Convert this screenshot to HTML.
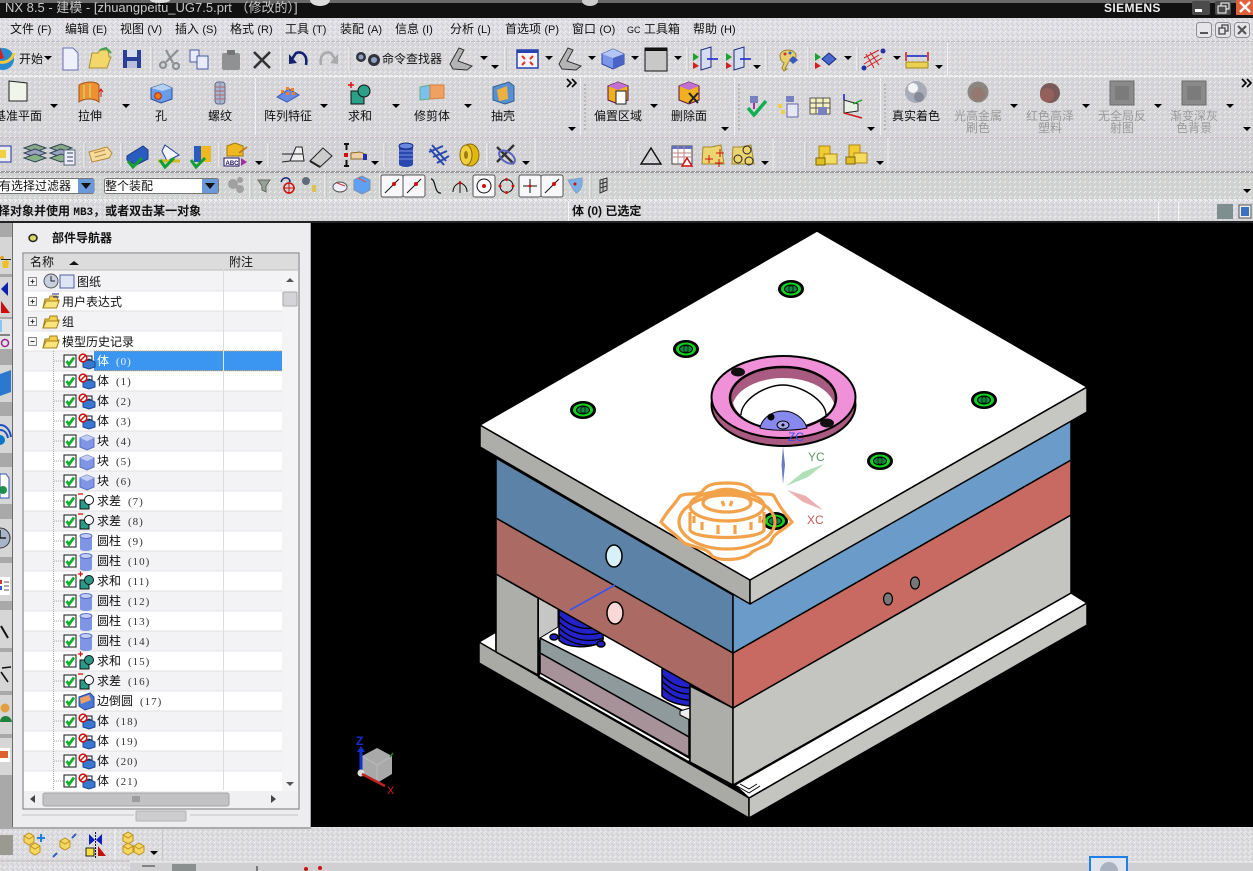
<!DOCTYPE html>
<html><head><meta charset="utf-8"><title>NX 8.5</title>
<style>
html,body{margin:0;padding:0;background:#000;width:1253px;height:871px;overflow:hidden}
svg{display:block}
text{font-family:"Liberation Sans","WenQuanYi Zen Hei","Noto Sans CJK SC",sans-serif;font-size:12px;fill:#111}
.d{fill:#9a9a9a}
.m{font-size:12px}
.b{font-weight:bold;font-family:"Liberation Sans","Noto Sans CJK SC",sans-serif}
.n{font-family:"Liberation Serif",serif;font-size:11px;fill:#333;letter-spacing:1px}
.c{text-anchor:middle}
</style></head><body>
<svg width="1253" height="871" viewBox="0 0 1253 871" xmlns="http://www.w3.org/2000/svg">
<defs>
<pattern id="dit" width="5" height="5" patternUnits="userSpaceOnUse"><rect x="0" y="1" width="1" height="1" fill="#f6eef4"/><rect x="3" y="0" width="1" height="1" fill="#c4c8d8"/><rect x="1" y="3" width="1" height="1" fill="#d8c8d0"/><rect x="4" y="2" width="1" height="1" fill="#eef2f4"/><rect x="2" y="4" width="1" height="1" fill="#c8ccc8"/></pattern>
<g id="ar"><path d="M-4-2H4L0 2Z" fill="#000"/></g>
<g id="more"><path d="M-5-4-1 0-5 4M0-4 4 0 0 4" fill="none" stroke="#000" stroke-width="1.6"/></g>
<g id="sp"><path d="M0-12V12" stroke="#f4f4f6" stroke-width="1.2"/><path d="M1-12V12" stroke="#a8a8aa" stroke-width=".6"/></g>
<g id="doc"><path d="M-7-11H3L8-6V11H-7Z" fill="#eef0fb" stroke="#6a6fb5"/></g>
<g id="fold"><path d="M-11 9-8-6H-2L0-9H8L9-2 11-2 7 9Z" fill="#f3d76a" stroke="#a6913a"/><path d="M0-9 6-11 11-6" fill="none" stroke="#3fa14a" stroke-width="2"/></g>
<g id="save"><rect x="-9" y="-9" width="18" height="18" fill="#2a3f97"/><rect x="-5" y="-9" width="10" height="7" fill="#d7dcec"/><rect x="-5" y="2" width="10" height="7" fill="#b9c0d6"/></g>
<g id="sci" stroke="#8d9092" fill="none" stroke-width="2.2"><path d="M-3-9 4 4M9-9-3 3"/><circle cx="-6" cy="6" r="3"/><circle cx="7" cy="7" r="3"/></g>
<g id="cop" fill="#e8ecfa" stroke="#4a5aa0"><path d="M-10-9H-1V3H-10Z"/><path d="M-3-3H8V10H-3Z"/></g>
<g id="pas"><rect x="-9" y="-7" width="18" height="17" rx="2" fill="#8f9192"/><rect x="-4" y="-10" width="8" height="5" fill="#737576"/></g>
<g id="x"><path d="M-8-8 8 8M8-8-8 8" stroke="#333" stroke-width="2.6"/></g>
<g id="und"><path d="M-8 3 -2-6C4-8 10-4 8 6" fill="none" stroke="#14226e" stroke-width="2.6"/><path d="M-9-5-9 5-1 4Z" fill="#14226e"/></g>
<g id="red"><path d="M8 3 2-6C-4-8-10-4-8 6" fill="none" stroke="#a8aaac" stroke-width="2.6"/><path d="M9-5 9 5 1 4Z" fill="#a8aaac"/></g>
<g id="bino"><circle cx="-6" cy="-1" r="5" fill="#30323c"/><circle cx="7" cy="2" r="6" fill="#30323c"/><circle cx="7" cy="2" r="3" fill="#8fa0c0"/><circle cx="-6" cy="-1" r="2.5" fill="#8fa0c0"/></g>
<g id="angl"><path d="M-11 5-2-11 3-9-3 2 11 7 6 11-8 10Z" fill="#b4b4b4" stroke="#333"/></g>
<g id="fit"><rect x="-10" y="-9" width="21" height="18" fill="#f4f4fa" stroke="#2844b0" stroke-width="1.5"/><rect x="-10" y="-9" width="21" height="3" fill="#2844b0"/><path d="M-5-3-2 0M6-3 3 0M-5 6-2 3M6 6 3 3" stroke="#e03018" stroke-width="2"/></g>
<g id="cube"><path d="M-11-5 0-10 11-5V5L0 10-11 5Z" fill="#7d95e8" stroke="#3148a8"/><path d="M-11-5 0-1 11-5 0-10Z" fill="#b6c6f4"/><path d="M0-1V10L11 5V-5Z" fill="#4b63c4"/></g>
<g id="sq"><rect x="-11" y="-11" width="22" height="23" fill="#c8c8c8" stroke="#111"/><rect x="-11" y="-11" width="22" height="3" fill="#111"/></g>
<g id="mir"><path d="M-3-9 7-12V8L-3 11Z" fill="#d6ddf2" stroke="#1d2a78"/><path d="M-11-6-5-2-11 2Z" fill="#20a030"/><path d="M-11 3-5 7-11 10Z" fill="#d02020"/><path d="M3 0H14" stroke="#1d2ad0" stroke-width="1.6"/></g>
<g id="pal"><path d="M-8-3C-8-11 8-11 8-3 8 3 0 1 0 4L-3 10H-1L-4 12-6 9-4 4C-6 3-8 1-8-3Z" fill="#e7cf6e" stroke="#9a8636"/><circle cx="-3" cy="-5" r="1.5" fill="#d03030"/><circle cx="2" cy="-6" r="1.5" fill="#3060d0"/><path d="M5-3 10 1 5 5 1 1Z" fill="#3858c0"/></g>
<g id="dia"><path d="M-10-6-4-2-10 2Z" fill="#20a030"/><path d="M-10 3-4 7-10 10Z" fill="#d02020"/><path d="M4-6 11 0 4 6-3 0Z" fill="#4868d0" stroke="#1d2a78"/></g>
<g id="ant" stroke="#d02020"><path d="M-9-1 6-9M-9 5 6-4M-6 8 9-1M-3-7 6 6M-7-5 1 9" fill="none"/><circle cx="10" cy="-8" r="2.5" fill="#2030a0" stroke="none"/><circle cx="-9" cy="9" r="2.5" fill="#2030a0" stroke="none"/></g>
<g id="rul"><path d="M-11-9V0M11-9V0" stroke="#d01818" stroke-width="1.5"/><path d="M-10-5H10" stroke="#1020c0" stroke-width="1.5"/><rect x="-11" y="1" width="22" height="6" fill="#ecd050" stroke="#a08a20"/></g>
<g id="plane"><path d="M-9-11 9-9V9L-9 9Z" fill="#f0f4ea" stroke="#222"/></g>
<g id="ext"><path d="M-11-8C-4-12 6-12 9-8V9C4 5-6 5-11 9Z" fill="#f09030" stroke="#a05010"/><path d="M-6-8V6M0-9V5" stroke="#d8c058" stroke-width="2"/><path d="M11-3V4M9-1 11-4 13-1" stroke="#d01818" fill="none"/></g>
<g id="hole"><path d="M-10-5 2-9 11-5V6L0 10-10 6Z" fill="#6a9ce8" stroke="#2c5098"/><path d="M-10-5 1-2 11-5 2-9Z" fill="#b4d0f4"/><circle cx="-3" cy="3" r="3.4" fill="#f07818" stroke="#b03010"/></g>
<g id="thrd"><rect x="-5" y="-11" width="10" height="22" rx="3" fill="#a8b4d0" stroke="#606a88"/><path d="M-5-6H5M-5-2H5M-5 2H5M-5 6H5" stroke="#c06060"/><path d="M0-11V11" stroke="#808aa8"/></g>
<g id="arr"><path d="M-11 3 1-5 11 1-1 8Z" fill="#6a8ce0" stroke="#3a5ab8"/><rect x="-7" y="-4" width="3" height="3" fill="#f08020"/><rect x="-2" y="-7" width="3" height="3" fill="#f08020"/><rect x="3" y="-6" width="3" height="3" fill="#f08020"/><rect x="-2" y="-2" width="3" height="3" fill="#f08020"/><rect x="4" y="-2" width="3" height="3" fill="#f08020"/></g>
<g id="uni"><rect x="-9" y="-3" width="13" height="13" fill="#2aa088" stroke="#111"/><circle cx="4" cy="-3" r="6" fill="#2aa088" stroke="#111"/><path d="M-12-9H-6M-9-12V-6" stroke="#e01010" stroke-width="1.5"/></g>
<g id="trim"><path d="M-12-6-2-8V6L-12 7Z" fill="#7cc0ee" stroke="#6a8"/><path d="M-2-8 12-8V5L-2 6Z" fill="#f0a060" stroke="#d08040"/></g>
<g id="shell"><path d="M-10-6 6-11 11-7V8L2 11-10 7Z" fill="#5a90d0" stroke="#306090"/><path d="M-6-3 4-7 5 6-4 8Z" fill="#f0b040"/></g>
<g id="offs"><path d="M-10-7 0-11 10-7V7L0 11-10 7Z" fill="#f0b020" stroke="#601040"/><path d="M-10-7 0-3 10-7 0-11Z" fill="#c070d0"/><path d="M-2-2H8V11H-2Z" fill="#fff" stroke="#222"/></g>
<g id="delf"><path d="M-10-7 0-11 10-7V7L0 11-10 7Z" fill="#f0b020" stroke="#601040"/><path d="M-10-7 0-3 10-7 0-11Z" fill="#c070d0"/><path d="M0 0 9 10M9 0 0 10" stroke="#222" stroke-width="2"/></g>
<g id="chk"><path d="M-9 1-3 8 9-6" fill="none" stroke="#10b050" stroke-width="3.4"/><rect x="-7" y="-11" width="8" height="7" fill="#7880c0"/><path d="M-3-4V2" stroke="#a030a0" stroke-width="2"/></g>
<g id="hier"><rect x="-1" y="-3" width="11" height="13" fill="#e6e6f6" stroke="#6668a8"/><rect x="-10" y="-3" width="4" height="4" fill="#f0d040"/><rect x="-7" y="3" width="4" height="4" fill="#f0d040"/><rect x="-2" y="-11" width="8" height="6" fill="#7880c0"/></g>
<g id="tab"><rect x="-10" y="-9" width="20" height="16" fill="#f4f0c0" stroke="#555"/><path d="M-10-4H10M-10 1H10M-4-9V7M3-9V7" stroke="#555"/><rect x="-2" y="0" width="9" height="8" fill="#7880c0"/></g>
<g id="wcs"><path d="M-6-8-6 5 8 3 8-4Z" fill="#e8f0e8" stroke="#222"/><path d="M-6 5 12 10" stroke="#d01818" stroke-width="1.5"/><path d="M3-4 12-8" stroke="#18a018" stroke-width="1.5"/><path d="M-6-8V-14" stroke="#1818d0" stroke-width="1.5"/></g>
<g id="ball"><circle r="11" fill="#a8acb8"/><circle cx="-3" cy="-4" r="5" fill="#f4f4f6"/><circle cx="3" cy="5" r="5" fill="#787c88" opacity=".7"/></g>
<g id="ballg"><circle r="10.500" fill="#8b8780"/><circle cx="0" cy="2" r="7" fill="#9a6f68" opacity=".6"/></g>
<g id="ballr"><circle r="10" fill="#7a5a58"/><circle cx="-3" cy="2" r="7" fill="#94605c"/></g>
<g id="sqg"><rect x="-12" y="-12" width="24" height="24" fill="#8a8a8a" stroke="#6c6c6c"/><rect x="-7" y="-7" width="14" height="14" fill="#7b7b7b"/></g>
<g id="lay" stroke="#345"><path d="M-11-7 0-11 11-7 0-3Z" fill="#84a888"/><path d="M-11-2 0-6 11-2 0 2Z" fill="#98a4c0"/><path d="M-11 3 0-1 11 3 0 7Z" fill="#88b088"/></g>
<g id="lis"><use href="#lay" x="-4"/><rect x="-1" y="-5" width="11" height="15" fill="#eef" stroke="#567"/><path d="M2-2H8M2 2H8M2 6H8" stroke="#345"/></g>
<g id="tag"><path d="M-11-3 7-8 12-2 9 3-8 7Z" fill="#f4dc9c" stroke="#b88a3a"/><path d="M-6-2 5-5M-5 2 6-1" stroke="#b88a3a"/></g>
<g id="v1"><path d="M-11 1 5-9 10-5V4L-2 10-11 5Z" fill="#2a5cc0" stroke="#1a3a8a"/><path d="M-10 6-5 12 4 3" fill="none" stroke="#10a030" stroke-width="3"/></g>
<g id="v2"><path d="M-5-10 9 0-3 6-8-4Z" fill="#f4f4ff" stroke="#2040a0"/><path d="M-12 6 10 6" stroke="#d8b820" stroke-width="3"/><path d="M-10 5-5 12 4 3" fill="none" stroke="#10a030" stroke-width="3"/></g>
<g id="v3"><rect x="-7" y="-9" width="8" height="16" fill="#2a5cc0"/><rect x="0" y="-9" width="10" height="16" fill="#f0b820"/><path d="M-10 5-5 12 4 3" fill="none" stroke="#10a030" stroke-width="3"/></g>
<g id="abc"><path d="M-8-11 0-14 8-11V-1H-8Z" fill="#f0b820" stroke="#a07810"/><rect x="-11" y="1" width="15" height="8" fill="#fff" stroke="#201060"/><text x="-9.500" y="8" style="font-size:6px;font-weight:bold;fill:#201060">ABC</text><path d="M6 1 12 5 6 9Z" fill="#a030a0"/><path d="M4-4 12-10" stroke="#c08020" stroke-width="2"/></g>
<g id="t1"><path d="M-10 7-2 6 4-8 10-8 12 6H-2" fill="#eee" stroke="#222"/><path d="M-10-1H11" stroke="#222"/></g>
<g id="t2"><path d="M-11 4 2-9 11-1-1 10Z" fill="#ccc" stroke="#222"/><path d="M-11 4-1 10" stroke="#222" stroke-width="2"/></g>
<g id="t3"><path d="M-11-11H-6M-11 11H-6M-8.500-11V-5M-8.500 11V5" stroke="#111" stroke-width="2"/><rect x="-11" y="-2" width="4" height="4" fill="#d01010"/><path d="M-4-2 5-3 10-1V4H-4Z" fill="#f0d0a0" stroke="#8a6a30"/><rect x="8" y="-1" width="4" height="6" fill="#2030b0"/></g>
<g id="cyl"><rect x="-7" y="-9" width="14" height="18" fill="#2a48b0"/><ellipse cy="-9" rx="7" ry="3" fill="#6a88e0" stroke="#1a2a80"/><ellipse cy="9" rx="7" ry="3" fill="#2a48b0"/><path d="M-7-4H7M-7 0H7M-7 4H7" stroke="#7a90e0"/></g>
<g id="spr"><path d="M-6-10 8 6M-8-6 6 10M-9-3 5-9M-5 2 9-4M-1 8 11 1" stroke="#2a48b0" stroke-width="2" fill="none"/></g>
<g id="coil"><ellipse cx="1" rx="9" ry="11" fill="#e0b810" stroke="#8a6a08"/><ellipse cx="-3" rx="6" ry="10" fill="#f0d040" stroke="#8a6a08"/><ellipse cx="-3" rx="2" ry="4" fill="#a07c10"/></g>
<g id="stri"><path d="M-8-8 9 9M9-10-8 7" stroke="#333" stroke-width="2.4"/><ellipse cx="2" cy="2" rx="9" ry="5" fill="none" stroke="#5a64c0" stroke-width="2" transform="rotate(35 2 2)"/></g>
<g id="tri"><path d="M-10 8 0-8 10 8Z" fill="none" stroke="#111" stroke-width="1.4"/></g>
<g id="grid"><rect x="-10" y="-9" width="20" height="18" fill="#fafafa" stroke="#444"/><rect x="-10" y="-9" width="20" height="3" fill="#6070c0"/><path d="M-10-2H10M-10 2H10M-4-9V9M2-9V9" stroke="#bb8888"/><path d="M0 11 5 3 10 11Z" fill="#fff" stroke="#d01010" stroke-width="1.5"/></g>
<g id="ff1"><path d="M-11 9-10-8H-2L8-10 11 9Z" fill="#ecd470" stroke="#a08a30"/><path d="M-8 4H0M-4 0V8M3-2H11M7-6V2M2 8H10M6 4V12" stroke="#d01010"/></g>
<g id="ff2"><path d="M-11 9-10-8H-2L8-10 11 9Z" fill="#ecd470" stroke="#a08a30"/><circle cx="4" cy="-5" r="4" fill="none" stroke="#222"/><circle cx="-5" cy="4" r="4" fill="none" stroke="#222"/><circle cx="6" cy="6" r="4" fill="none" stroke="#222"/></g>
<g id="lk1"><path d="M-8-10 3-10V3H-8Z" fill="#f0cc30" stroke="#b08810"/><path d="M-3-2 10-2V8H-3Z" fill="#f4dc60" stroke="#b08810"/><rect x="-11" y="2" width="9" height="7" fill="#e0c020" stroke="#806408"/></g>
<g id="yc"><path d="M-5-5 0-8 5-5V1L0 4-5 1Z" fill="#f4d860" stroke="#c09020"/><path d="M-5-5 0-2 5-5" fill="none" stroke="#c09020"/></g>
<g id="cb"><rect x="0" y="0" width="12" height="12" fill="#fff" stroke="#111"/><path d="M2.500 6 5 9.500 10 2.500" fill="none" stroke="#10b030" stroke-width="2.800"/></g>
<g id="ib"><path d="M3-2 9 1V6L3 8-3 6V1Z" fill="#3a78d0" stroke="#1a4a90"/><path d="M0-1H6V-5H0" fill="none" stroke="#123" stroke-width="1"/><circle cx="-3" cy="-3" r="3.800" fill="#fff" stroke="#d01010" stroke-width="1.600"/><path d="M-6 0 0-6" stroke="#d01010" stroke-width="1.400"/></g>
<g id="ik"><path d="M-6-3 1-6 8-3V6L1 9-6 6Z" fill="#7f95e6" stroke="#5a70c0"/><path d="M-6-3 1 0 8-3 1-6Z" fill="#c2cef6"/></g>
<g id="ic"><rect x="-6" y="-5" width="12" height="13" fill="#7f95e6"/><ellipse cy="-5" rx="6" ry="2.500" fill="#c2cef6" stroke="#5a70c0"/><ellipse cy="8" rx="6" ry="2" fill="#7f95e6"/></g>
<g id="iu"><rect x="-6" y="-1" width="9" height="9" fill="#2a9a88" stroke="#111"/><circle cx="3" cy="-1" r="4.500" fill="#2a9a88" stroke="#111"/><path d="M-8-7H-3M-5.500-9.500V-4.500" stroke="#e01010" stroke-width="1.300"/></g>
<g id="im"><rect x="-6" y="-1" width="9" height="9" fill="#2a9a88" stroke="#111"/><circle cx="3" cy="-1" r="4.500" fill="#fff" stroke="#111"/><path d="M-8-7H-3" stroke="#e01010" stroke-width="1.300"/></g>
<g id="ie"><path d="M-7-4 4-8 8-4V6L-1 9-7 5Z" fill="#4a78d8" stroke="#2a4a98"/><path d="M-6-3 3-6 5-1-5 3Z" fill="#f0a060"/></g>
<g id="pl"><rect x="-3.500" y="-3.500" width="8" height="8" fill="#f4f4f4" stroke="#888"/><path d="M-1.500.5H2.500" stroke="#333"/></g>
<g id="pp"><use href="#pl"/><path d="M.5-1.500V2.500" stroke="#333"/></g>
<g id="y1"><path d="M-8 6-6-3H-2L-1-6H6L6.500-2 8-2 5.500 6Z" fill="#f4d050" stroke="#a08020"/><path d="M-8 6-5-1H8L5.500 6Z" fill="#fbe47a" stroke="#a08020"/></g>
<g id="bx"><rect x="-11" y="-11" width="22" height="22" rx="2" fill="#f8f8fa" stroke="#555"/></g>
<g id="ln"><path d="M-7 7 7-7" stroke="#111"/><circle cx="2" cy="-2" r="2" fill="#d01010"/></g>
<g id="scr"><ellipse rx="13" ry="9" fill="#000"/><ellipse rx="10" ry="6.500" fill="#10d020"/><ellipse rx="6.500" ry="4" fill="#108a40" stroke="#000"/><rect x="-2" y="-3" width="4" height="6" fill="#108a40" stroke="#000" stroke-width=".7"/></g>
</defs>

<!-- chrome backgrounds -->
<rect width="1253" height="871" fill="#d4d4d6"/>
<rect width="1253" height="3" fill="#6a6868"/>
<rect y="3" width="1253" height="15" fill="#111"/>
<rect y="18" width="1253" height="24" fill="#e0dfe3"/>
<rect y="41" width="1253" height="1" fill="#bdbdc0"/>
<rect y="42" width="1253" height="33" fill="#d9d9dc"/>
<rect y="75" width="1253" height="2" fill="#f0f0f2"/>
<rect y="77" width="1253" height="60" fill="#d6d6d8"/>
<rect y="137" width="1253" height="1" fill="#c8bcc8"/>
<rect y="138" width="1253" height="34" fill="#d2d2d4"/>
<rect y="171" width="1253" height="2" fill="#9c9c9e"/>
<rect y="173" width="1253" height="26" fill="#d2d4d2"/>
<rect y="199" width="1253" height="2" fill="#ececee"/>
<rect y="201" width="1253" height="20" fill="#dadadc"/>
<rect y="18" width="1253" height="203" fill="url(#dit)"/>
<rect y="221" width="1253" height="2" fill="#222"/>

<!-- title -->
<text x="5" y="12" style="font-size:13px;fill:#c8c8c8">NX 8.5 - 建模 - [zhuangpeitu_UG7.5.prt （修改的）]</text>
<ellipse cx="160" cy="0" rx="10" ry="3" fill="#ddd"/><ellipse cx="320" cy="0" rx="10" ry="6" fill="#ddd"/><ellipse cx="590" cy="1" rx="8" ry="5" fill="#ccc"/>
<text x="1104" y="12" class="b" style="font-size:12px;fill:#eee;letter-spacing:.4px">SIEMENS</text>
<rect x="1192" y="1" width="18" height="14" rx="2" fill="#4a4a4a"/><rect x="1195" y="9" width="7" height="3" fill="#fff"/>
<rect x="1215" y="1" width="16" height="14" rx="2" fill="#4a4a4a"/><path d="M1218 6H1226V13H1218ZM1221 6V3H1229V9H1226" fill="none" stroke="#fff"/>
<rect x="1236" y="0" width="17" height="15" fill="#e0603a"/><path d="M1240 2 1250 12M1250 2 1240 12" stroke="#fff" stroke-width="2.400"/>

<!-- menu -->
<g class="m">
<text x="10" y="33">文件 <tspan style="font-size:11px">(F)</tspan></text>
<text x="65" y="33">编辑 <tspan style="font-size:11px">(E)</tspan></text>
<text x="120" y="33">视图 <tspan style="font-size:11px">(V)</tspan></text>
<text x="175" y="33">插入 <tspan style="font-size:11px">(S)</tspan></text>
<text x="230" y="33">格式 <tspan style="font-size:11px">(R)</tspan></text>
<text x="285" y="33">工具 <tspan style="font-size:11px">(T)</tspan></text>
<text x="340" y="33">装配 <tspan style="font-size:11px">(A)</tspan></text>
<text x="395" y="33">信息 <tspan style="font-size:11px">(I)</tspan></text>
<text x="450" y="33">分析 <tspan style="font-size:11px">(L)</tspan></text>
<text x="505" y="33">首选项 <tspan style="font-size:11px">(P)</tspan></text>
<text x="572" y="33">窗口 <tspan style="font-size:11px">(O)</tspan></text>
<text x="627" y="33"><tspan style="font-size:9px">GC</tspan> 工具箱</text>
<text x="693" y="33">帮助 <tspan style="font-size:11px">(H)</tspan></text>
</g>
<g fill="#e6e6ea" stroke="#8e8e92">
<rect x="1196.500" y="22.500" width="15" height="15" rx="3"/><rect x="1215.500" y="22.500" width="15" height="15" rx="3"/><rect x="1234.500" y="22.500" width="15" height="15" rx="3"/></g>
<path d="M1200 33H1208" stroke="#555" stroke-width="2"/><path d="M1219 28H1225V34H1219ZM1222 28V25H1228V31H1225" fill="none" stroke="#444" stroke-width="1.300"/><path d="M1238 26 1246 34M1246 26 1238 34" stroke="#555" stroke-width="2.200"/>

<!-- row 1 -->
<circle cx="3" cy="59" r="11" fill="#2a8ad0"/><path d="M-6 58C0 66 12 62 14 53" fill="none" stroke="#f0c840" stroke-width="3"/><path d="M0 47 4 58-2 60Z" fill="#d02020"/>
<text x="19" y="63">开始</text><use href="#ar" x="48" y="58"/>
<use href="#doc" x="70" y="59"/><use href="#fold" x="100" y="59"/><use href="#save" x="132" y="59"/>
<use href="#sp" x="151" y="59"/><use href="#sci" x="169" y="59"/><use href="#cop" x="200" y="59"/><use href="#pas" x="231" y="60"/><use href="#x" x="262" y="60"/>
<use href="#sp" x="281" y="59"/><use href="#und" x="298" y="59"/><use href="#red" x="329" y="59"/>
<use href="#sp" x="349" y="59"/><use href="#bino" x="367" y="58"/><text x="382" y="63">命令查找器</text>
<use href="#angl" x="461" y="59"/><use href="#ar" x="484" y="58"/><use href="#ar" x="495" y="67"/>
<use href="#sp" x="505" y="59"/><use href="#fit" x="527" y="59"/><use href="#ar" x="549" y="58"/><use href="#angl" x="570" y="59"/><use href="#ar" x="592" y="58"/><use href="#cube" x="613" y="59"/><use href="#ar" x="635" y="58"/><use href="#sq" x="656" y="59"/><use href="#ar" x="678" y="58"/>
<use href="#sp" x="687" y="59"/><use href="#mir" x="704" y="59"/><use href="#mir" x="737" y="59"/><use href="#ar" x="757" y="67"/>
<use href="#sp" x="766" y="59"/><use href="#pal" x="788" y="59"/><use href="#sp" x="808" y="59"/><use href="#dia" x="825" y="59"/><use href="#ar" x="848" y="58"/>
<use href="#sp" x="857" y="59"/><use href="#ant" x="873" y="59"/><use href="#ar" x="897" y="58"/><use href="#rul" x="917" y="61"/><use href="#ar" x="939" y="67"/>
<path d="M947.500 42V75" stroke="#f2f2f4"/>

<!-- row 2 -->
<use href="#plane" x="18" y="92"/><text x="18" y="120" class="c">基准平面</text><use href="#ar" x="54" y="106"/>
<use href="#ext" x="90" y="93"/><text x="90" y="120" class="c">拉伸</text><use href="#ar" x="126" y="106"/>
<use href="#hole" x="161" y="93"/><text x="161" y="120" class="c">孔</text>
<use href="#thrd" x="220" y="93"/><text x="220" y="120" class="c">螺纹</text>
<path d="M255.500 78V135" stroke="#f2f2f4"/>
<use href="#arr" x="288" y="94"/><text x="288" y="120" class="c">阵列特征</text><use href="#ar" x="324" y="106"/>
<use href="#uni" x="360" y="94"/><text x="360" y="120" class="c">求和</text><use href="#ar" x="396" y="106"/>
<use href="#trim" x="432" y="93"/><text x="432" y="120" class="c">修剪体</text><use href="#ar" x="468" y="106"/>
<use href="#shell" x="503" y="93"/><text x="503" y="120" class="c">抽壳</text>
<use href="#more" x="572" y="83"/><use href="#ar" x="572" y="129"/>
<path d="M580.500 78V135" stroke="#f2f2f4"/><path d="M585 84V132" stroke="#999" stroke-dasharray="2 2"/>
<use href="#offs" x="618" y="93"/><text x="618" y="120" class="c">偏置区域</text><use href="#ar" x="654" y="106"/>
<use href="#delf" x="689" y="93"/><text x="689" y="120" class="c">删除面</text><use href="#ar" x="725" y="129"/>
<path d="M734.500 78V135" stroke="#f2f2f4"/><path d="M739 84V132" stroke="#999" stroke-dasharray="2 2"/>
<use href="#chk" x="757" y="107"/><use href="#hier" x="788" y="107"/><use href="#tab" x="820" y="107"/><use href="#wcs" x="850" y="108"/><use href="#ar" x="871" y="129"/>
<path d="M880.500 78V135" stroke="#f2f2f4"/><path d="M885 84V132" stroke="#999" stroke-dasharray="2 2"/>
<use href="#ball" x="916" y="92"/><text x="916" y="120" class="c">真实着色</text>
<use href="#ballg" x="978" y="92"/><text x="978" y="120" class="c d">光高金属</text><text x="978" y="132" class="c d">刷色</text><use href="#ar" x="1014" y="106"/>
<use href="#ballr" x="1050" y="93"/><text x="1050" y="120" class="c d">红色高泽</text><text x="1050" y="132" class="c d">塑料</text><use href="#ar" x="1086" y="106"/>
<use href="#sqg" x="1122" y="93"/><text x="1122" y="120" class="c d">无全局反</text><text x="1122" y="132" class="c d">射图</text><use href="#ar" x="1158" y="106"/>
<use href="#sqg" x="1194" y="93"/><text x="1194" y="120" class="c d">渐变深灰</text><text x="1194" y="132" class="c d">色背景</text><use href="#ar" x="1230" y="106"/>
<use href="#more" x="1247" y="83"/><use href="#ar" x="1247" y="129"/>

<!-- row 3 -->
<rect x="-2" y="146" width="13" height="16" fill="#eee" stroke="#2030a0"/><rect x="-2" y="150" width="8" height="8" fill="#f0d040"/>
<use href="#lay" x="35" y="155"/><use href="#lis" x="65" y="155"/><use href="#sp" x="84" y="155"/><use href="#tag" x="100" y="155"/><use href="#sp" x="121" y="155"/>
<use href="#v1" x="138" y="155"/><use href="#v2" x="170" y="155"/><use href="#v3" x="201" y="155"/><use href="#sp" x="219" y="155"/>
<use href="#abc" x="235" y="157"/><use href="#ar" x="259" y="163"/><use href="#sp" x="268" y="155"/>
<use href="#t1" x="292" y="155"/><use href="#t2" x="321" y="157"/><use href="#t3" x="355" y="155"/><use href="#ar" x="375" y="163"/><use href="#sp" x="384" y="155"/>
<use href="#cyl" x="406" y="155"/><use href="#spr" x="438" y="155"/><use href="#coil" x="469" y="155"/><use href="#sp" x="487" y="155"/><use href="#stri" x="505" y="155"/><use href="#ar" x="526" y="163"/><path d="M535 138V171" stroke="#eee"/>
<use href="#sp" x="629" y="155"/><use href="#tri" x="651" y="156"/><use href="#grid" x="682" y="155"/><use href="#ff1" x="713" y="155"/><use href="#ff2" x="743" y="155"/><use href="#ar" x="765" y="163"/><path d="M773 138V171" stroke="#eee"/>
<use href="#sp" x="805" y="155"/><use href="#lk1" x="827" y="156"/><use href="#lk1" x="857" y="155"/><use href="#ar" x="880" y="163"/><path d="M888 138V171" stroke="#eee"/>

<!-- row 4 -->
<rect x="-3" y="178.500" width="97" height="15" rx="2" fill="#fff" stroke="#777"/><text x="-1" y="190" style="font-size:12px">有选择过滤器</text><rect x="78" y="179" width="16" height="14" fill="#6a98d8"/><path d="M81 183H91L86 189Z" fill="#111"/>
<rect x="104.500" y="178.500" width="114" height="15" rx="2" fill="#fff" stroke="#777"/><text x="105" y="190" style="font-size:12px">整个装配</text><rect x="202" y="179" width="16" height="14" fill="#6a98d8"/><path d="M205 183H215L210 189Z" fill="#111"/>
<circle cx="233" cy="184" r="5" fill="#a0a0a0"/><circle cx="240" cy="189" r="4" fill="#a0a0a0"/><circle cx="240" cy="180" r="3" fill="#a0a0a0"/>
<use href="#sp" x="250" y="186"/><path d="M258 180 270 180 266 186V192L262 190V186Z" fill="#98a098" stroke="#606860"/>
<circle cx="289" cy="188" r="5" fill="none" stroke="#d01010" stroke-width="1.500"/><path d="M283 188H295M289 182V194" stroke="#d01010"/><path d="M281 182C283 176 290 177 290 182" fill="none" stroke="#14226e" stroke-width="1.600"/>
<circle cx="306" cy="181" r="4" fill="#606a78"/><rect x="312" y="185" width="4" height="7" fill="#e0c050"/>
<use href="#sp" x="325" y="186"/><ellipse cx="340" cy="187" rx="7" ry="5" fill="#eef" stroke="#555"/><path d="M337 183 345 186" stroke="#d03030"/>
<path d="M354 180 362 176 370 180V190L362 194 354 190Z" fill="#60a0f0" stroke="#7a90b0"/><path d="M358 178 366 182" stroke="#e05050"/>
<use href="#sp" x="380" y="186"/>
<use href="#bx" x="392" y="186"/><use href="#ln" x="392" y="186"/><use href="#bx" x="414" y="186"/><use href="#ln" x="414" y="186"/>
<path d="M431 179C436 179 434 194 441 193" fill="none" stroke="#111" stroke-width="1.200"/>
<path d="M453 192C453 185 459 183 460 183 461 183 467 185 467 192M460 181V193" fill="none" stroke="#111"/><circle cx="460" cy="183" r="1.500" fill="#d01010"/>
<use href="#bx" x="484" y="186"/><circle cx="484" cy="186" r="7" fill="none" stroke="#111"/><circle cx="484" cy="186" r="2" fill="#d01010"/>
<circle cx="506.500" cy="186" r="6.500" fill="none" stroke="#111"/><circle cx="506.500" cy="179.500" r="1.500" fill="#d01010"/><circle cx="506.500" cy="192.500" r="1.500" fill="#d01010"/><circle cx="500" cy="186" r="1.500" fill="#d01010"/><circle cx="513" cy="186" r="1.500" fill="#d01010"/>
<use href="#bx" x="530" y="186"/><path d="M523 186H537M530 179V193" stroke="#111"/><circle cx="530" cy="186" r="1.500" fill="#d01010"/>
<use href="#bx" x="552" y="186"/><use href="#ln" x="552" y="186"/>
<path d="M568 180 582 178C583 186 580 192 576 193 572 188 570 184 568 180Z" fill="#7ab0e8" stroke="#8aa0c0"/><circle cx="575" cy="184" r="1.500" fill="#d01010"/>
<use href="#sp" x="590" y="186"/><path d="M600 180 607 178V190L600 193ZM600 184 607 182M600 188 607 186M603 179V192" fill="#c8c8c8" stroke="#333"/>
<use href="#ar" x="1247" y="191"/>

<!-- row 5 -->
<text x="-2" y="215" class="b">择对象并使用 <tspan style="font-family:'Liberation Mono',monospace;font-size:11px">MB3</tspan>，或者双击某一对象</text>
<path d="M568.500 201V221" stroke="#f4f4f6"/>
<text x="572" y="215" class="b">体 (0) 已选定</text>
<path d="M1158.500 201V221M1178.500 201V221" stroke="#f4f4f6"/>
<rect x="1217" y="204" width="16" height="15" fill="#7f8f8f"/><rect x="1239" y="205" width="12" height="13" fill="#f0f0f0" stroke="#555"/><rect x="1241" y="207" width="8" height="9" fill="#3a70c0"/>

<!-- left strip -->
<rect y="223" width="13" height="604" fill="#a9a9a9"/>
<rect x="0" y="237" width="12" height="37" fill="#d6d6d6"/><circle cx="2" cy="258" r="2" fill="#e0a020"/><rect x="1" y="259" width="10" height="1" fill="#222"/><path d="M2 262 7 260 9 262 8 268 3 268Z" fill="#f0c020"/>
<rect x="0" y="277" width="12" height="40" fill="#d6d6d6"/><path d="M8 282V296L1 289Z" fill="#1020b0"/><path d="M1 301 10 313H1Z" fill="#c81010"/>
<rect x="0" y="319" width="12" height="30" fill="#e4e4e6"/><rect x="0" y="320" width="2" height="12" fill="#88c8f0"/><path d="M0 335H10" stroke="#222"/><circle cx="5" cy="343" r="3.500" fill="none" stroke="#a02090" stroke-width="1.500"/>
<rect x="0" y="365" width="12" height="37" fill="#d6d6d6"/><path d="M0 374 11 370V392L0 396Z" fill="#2a78d0"/>
<rect x="0" y="416" width="12" height="37" fill="#d6d6d6"/><path d="M0 425C6 425 10 430 11 437M0 430C4 430 7 433 8 438" fill="none" stroke="#2050c0" stroke-width="2"/><circle cx="0" cy="440" r="5" fill="#0a78c8"/>
<rect x="0" y="467" width="12" height="37" fill="#d6d6d6"/><path d="M0 474H6L9 478V498H0Z" fill="#fff" stroke="#3050b0"/><circle cx="3" cy="490" r="4" fill="#209050"/>
<rect x="0" y="519" width="12" height="38" fill="#d6d6d6"/><circle cx="0" cy="538" r="10" fill="#aab4c8" stroke="#333"/><path d="M0 530V538H6" stroke="#222" fill="none" stroke-width="1.500"/>
<rect x="0" y="563" width="12" height="38" fill="#d6d6d6"/><rect x="0" y="577" width="10" height="18" fill="#fff"/><rect x="0" y="580" width="2" height="4" fill="#d03030"/><rect x="0" y="586" width="2" height="4" fill="#3060d0"/><path d="M4 582H9M4 586H9M4 590H9" stroke="#555"/>
<rect x="0" y="610" width="12" height="38" fill="#d6d6d6"/><path d="M1 626 8 638" stroke="#111" stroke-width="2"/>
<rect x="0" y="652" width="12" height="39" fill="#d6d6d6"/><path d="M1 672 8 682M2 668 11 667" stroke="#111" stroke-width="1.600"/>
<rect x="0" y="695" width="12" height="39" fill="#d6d6d6"/><circle cx="5" cy="708" r="4.500" fill="#e0a040"/><path d="M0 722C0 714 11 714 12 722Z" fill="#208040"/>
<rect x="0" y="738" width="12" height="37" fill="#d6d6d6"/><rect x="0" y="748" width="10" height="14" fill="#fff"/><rect x="0" y="751" width="8" height="7" fill="#e06030"/>
<rect x="12" y="223" width="1" height="604" fill="#6c6c6c"/>

<!-- panel -->
<rect x="13" y="223" width="298" height="604" fill="#ededf0"/>
<ellipse cx="33" cy="238" rx="4" ry="3.500" fill="#d8d860" stroke="#222" stroke-width="1.500"/>
<text x="52" y="242" class="b">部件导航器</text>
<rect x="23" y="253" width="276" height="556" fill="#f3f3f6" stroke="#777"/>
<rect x="24" y="254" width="274" height="16" fill="#dcdcdc"/><path d="M24 270H298" stroke="#bbb"/>
<path d="M223.500 254V790" stroke="#ddd"/>
<text x="30" y="266" style="font-size:12px">名称</text><path d="M69 265 74 261 79 265Z" fill="#111"/><text x="229" y="266">附注</text>
<g fill="#fff">
<rect x="24" y="291" width="258" height="20"/><rect x="24" y="331" width="258" height="20"/><rect x="24" y="371" width="258" height="20"/><rect x="24" y="411" width="258" height="20"/><rect x="24" y="451" width="258" height="20"/><rect x="24" y="491" width="258" height="20"/><rect x="24" y="531" width="258" height="20"/><rect x="24" y="571" width="258" height="20"/><rect x="24" y="611" width="258" height="20"/><rect x="24" y="651" width="258" height="20"/><rect x="24" y="691" width="258" height="20"/><rect x="24" y="731" width="258" height="20"/><rect x="24" y="771" width="258" height="20"/>
</g>
<path d="M24 291H282M24 311H282M24 331H282M24 351H282M24 371H282M24 391H282M24 411H282M24 431H282M24 451H282M24 471H282M24 491H282M24 511H282M24 531H282M24 551H282M24 571H282M24 591H282M24 611H282M24 631H282M24 651H282M24 671H282M24 691H282M24 711H282M24 731H282M24 751H282M24 771H282" stroke="#e2e2e4"/>
<path d="M223.500 271V790" stroke="#dcdcde"/>
<rect x="94" y="351" width="188" height="20" fill="#3a96f0"/><path d="M223.500 351V371" stroke="#dfeaf8"/><path d="M94 351H282M94 370.500H282" stroke="#c8a060" stroke-dasharray="1 1"/>
<path d="M53.500 351V790" stroke="#aaa" stroke-dasharray="1 1"/>
<path d="M54 361H63M54 381H63M54 401H63M54 421H63M54 441H63M54 461H63M54 481H63M54 501H63M54 521H63M54 541H63M54 561H63M54 581H63M54 601H63M54 621H63M54 641H63M54 661H63M54 681H63M54 701H63M54 721H63M54 741H63M54 761H63M54 781H63" stroke="#aaa" stroke-dasharray="1 1"/>
<!-- top nodes -->
<use href="#pp" x="32" y="281"/><circle cx="51" cy="281" r="7" fill="#c8d0e0" stroke="#555"/><path d="M51 276V281H55" stroke="#222" fill="none"/><rect x="60" y="275" width="14" height="13" fill="#dde4f4" stroke="#5060a0"/><text x="77" y="286">图纸</text>
<use href="#pp" x="32" y="301"/><use href="#y1" x="51" y="302"/><path d="M52 294H59M53 297H59" stroke="#222080"/><text x="62" y="306">用户表达式</text>
<use href="#pp" x="32" y="321"/><use href="#y1" x="51" y="322"/><text x="62" y="326">组</text>
<use href="#pl" x="32" y="341"/><use href="#y1" x="51" y="342"/><text x="62" y="346">模型历史记录</text>
<!-- rows -->
<use href="#cb" x="64" y="355"/><use href="#ib" x="86" y="361"/><text x="97" y="365" style="fill:#fff">体</text><text x="116" y="365" class="n" style="fill:#e8f2ff">(0)</text>
<use href="#cb" x="64" y="375"/><use href="#ib" x="86" y="381"/><text x="97" y="385">体</text><text x="116" y="385" class="n">(1)</text>
<use href="#cb" x="64" y="395"/><use href="#ib" x="86" y="401"/><text x="97" y="405">体</text><text x="116" y="405" class="n">(2)</text>
<use href="#cb" x="64" y="415"/><use href="#ib" x="86" y="421"/><text x="97" y="425">体</text><text x="116" y="425" class="n">(3)</text>
<use href="#cb" x="64" y="435"/><use href="#ik" x="86" y="441"/><text x="97" y="445">块</text><text x="116" y="445" class="n">(4)</text>
<use href="#cb" x="64" y="455"/><use href="#ik" x="86" y="461"/><text x="97" y="465">块</text><text x="116" y="465" class="n">(5)</text>
<use href="#cb" x="64" y="475"/><use href="#ik" x="86" y="481"/><text x="97" y="485">块</text><text x="116" y="485" class="n">(6)</text>
<use href="#cb" x="64" y="495"/><use href="#im" x="86" y="501"/><text x="97" y="505">求差</text><text x="128" y="505" class="n">(7)</text>
<use href="#cb" x="64" y="515"/><use href="#im" x="86" y="521"/><text x="97" y="525">求差</text><text x="128" y="525" class="n">(8)</text>
<use href="#cb" x="64" y="535"/><use href="#ic" x="86" y="541"/><text x="97" y="545">圆柱</text><text x="128" y="545" class="n">(9)</text>
<use href="#cb" x="64" y="555"/><use href="#ic" x="86" y="561"/><text x="97" y="565">圆柱</text><text x="128" y="565" class="n">(10)</text>
<use href="#cb" x="64" y="575"/><use href="#iu" x="86" y="581"/><text x="97" y="585">求和</text><text x="128" y="585" class="n">(11)</text>
<use href="#cb" x="64" y="595"/><use href="#ic" x="86" y="601"/><text x="97" y="605">圆柱</text><text x="128" y="605" class="n">(12)</text>
<use href="#cb" x="64" y="615"/><use href="#ic" x="86" y="621"/><text x="97" y="625">圆柱</text><text x="128" y="625" class="n">(13)</text>
<use href="#cb" x="64" y="635"/><use href="#ic" x="86" y="641"/><text x="97" y="645">圆柱</text><text x="128" y="645" class="n">(14)</text>
<use href="#cb" x="64" y="655"/><use href="#iu" x="86" y="661"/><text x="97" y="665">求和</text><text x="128" y="665" class="n">(15)</text>
<use href="#cb" x="64" y="675"/><use href="#im" x="86" y="681"/><text x="97" y="685">求差</text><text x="128" y="685" class="n">(16)</text>
<use href="#cb" x="64" y="695"/><use href="#ie" x="86" y="701"/><text x="97" y="705">边倒圆</text><text x="140" y="705" class="n">(17)</text>
<use href="#cb" x="64" y="715"/><use href="#ib" x="86" y="721"/><text x="97" y="725">体</text><text x="116" y="725" class="n">(18)</text>
<use href="#cb" x="64" y="735"/><use href="#ib" x="86" y="741"/><text x="97" y="745">体</text><text x="116" y="745" class="n">(19)</text>
<use href="#cb" x="64" y="755"/><use href="#ib" x="86" y="761"/><text x="97" y="765">体</text><text x="116" y="765" class="n">(20)</text>
<use href="#cb" x="64" y="775"/><use href="#ib" x="86" y="781"/><text x="97" y="785">体</text><text x="116" y="785" class="n">(21)</text>
<!-- scrollbars -->
<rect x="282" y="271" width="16" height="520" fill="#f4f4f6"/>
<path d="M286 282 290 278 294 282Z" fill="#555"/><path d="M286 782 290 786 294 782Z" fill="#555"/>
<rect x="283" y="292" width="14" height="14" rx="1" fill="#d4d4d8" stroke="#aaa"/>
<rect x="24" y="791" width="274" height="17" fill="#f0f0f3"/>
<path d="M35 795 30 799 35 803Z" fill="#444"/><path d="M271 795 276 799 271 803Z" fill="#444"/>
<rect x="43" y="793" width="186" height="13" rx="2" fill="#c2c2c4" stroke="#a4a4a6"/><path d="M133 796V802M135 796V802M137 796V802M139 796V802" stroke="#777"/>
<path d="M22 815H134M190 815H298" stroke="#c4c4c6"/><rect x="136" y="811" width="50" height="10" rx="1" fill="#cdcdcf" stroke="#b4b4b6"/>
<rect x="310" y="223" width="1" height="604" fill="#aaa"/>

<!-- viewport -->
<rect x="311" y="223" width="942" height="604" fill="#000"/>
<g stroke="#000" stroke-width="1.500" stroke-linejoin="round">
<!-- base -->
<path d="M479 642 496 632V660L479 652Z" fill="#fff"/>
<path d="M479 642 749 798V818L479 663Z" fill="#a9a9a6"/>
<path d="M749 798 1087 603V625L749 818Z" fill="#c4c4c1"/>
<path d="M735 785 1071 593 1087 603 749 798Z" fill="#fff"/>
<path d="M737 786 749 793 760 786M740 784 749 789 757 784" fill="none" stroke-width="1"/>
<!-- interior -->
<path d="M538 596H692V765L538 678Z" fill="#000" stroke="none"/>
<path d="M539 596 559 609V640L539 640Z" fill="#c6c6c4" stroke="none"/>
<path d="M540 638 558 627V607L690 684V714Z" fill="#fff" stroke-width="1"/>
<path d="M540 638 689 714V737L540 653Z" fill="#8f9a9d"/>
<path d="M540 653 689 737V757L540 673Z" fill="#a8929a"/>
<path d="M540 675 689 760" stroke="#fff" stroke-width="2"/>
<path d="M540 678 689 763" stroke="#000" stroke-width="1"/>
<!-- springs -->
<path d="M559 610H603V640C596 649 566 649 559 640Z" fill="#2222c8"/>
<path d="M559 616Q578 634 604 626M559 622Q578 640 604 632M559 628Q578 646 604 638M559 634Q578 650 604 643" fill="none" stroke="#000" stroke-width="1.300"/>
<ellipse cx="554" cy="637" rx="4" ry="3" fill="#2222b8"/><ellipse cx="601" cy="644" rx="4" ry="3" fill="#2222b8"/>
<path d="M662 669H690V706C680 705 668 702 662 696Z" fill="#2222c8"/>
<path d="M662 675Q674 688 690 688M662 681Q674 694 690 694M662 687Q674 700 690 700" fill="none" stroke="#000" stroke-width="1.300"/>
<path d="M680 711 690 708V720L680 715Z" fill="#eee" stroke-width="1"/>
<!-- pillars -->
<path d="M496 574 538 598V675L496 652Z" fill="#adada9"/>
<path d="M690 686 733 708V785L690 762Z" fill="#adada9"/>
<!-- right gray -->
<path d="M733 708 1071 515V593L733 785Z" fill="#c4c4c1"/>
<!-- red -->
<path d="M496 518 733 653V708L496 574Z" fill="#ab6a63"/>
<path d="M733 653 1071 460V515L733 708Z" fill="#c86a62"/>
<!-- blue -->
<path d="M496 458 733 595V653L496 518Z" fill="#5c82a8"/>
<path d="M733 595 1071 420V460L733 653Z" fill="#6b9cc9"/>
<!-- plate -->
<path d="M480 425 750 580V604L480 447Z" fill="#adada9"/>
<path d="M750 580 1087 387V412L750 604Z" fill="#c6c6c3"/>
<path d="M817 231 1087 387 750 580 480 425Z" fill="#fff"/>
</g>
<path d="M615 585 570 610" stroke="#3a55ee" stroke-width="1.800"/>
<ellipse cx="614" cy="556" rx="8" ry="11" fill="#d8f0f8" stroke="#000" stroke-width="1.500"/>
<ellipse cx="615" cy="613" rx="8" ry="11" fill="#fbd8d8" stroke="#000" stroke-width="1.500"/>
<ellipse cx="888" cy="599" rx="4.500" ry="6" fill="#777" stroke="#000" stroke-width="1.200"/>
<ellipse cx="915" cy="583" rx="4.500" ry="6" fill="#777" stroke="#000" stroke-width="1.200"/>
<use href="#scr" x="791" y="289"/><use href="#scr" x="686" y="349"/><use href="#scr" x="583" y="410"/><use href="#scr" x="984" y="400"/><use href="#scr" x="880" y="461"/><use href="#scr" x="775" y="521"/>
<!-- ring -->
<ellipse cx="783.500" cy="405" rx="72" ry="41" fill="#a85a80" stroke="#000" stroke-width="2"/>
<ellipse cx="783.500" cy="397" rx="72" ry="41" fill="#f090d8" stroke="#000" stroke-width="2"/>
<ellipse cx="783" cy="398" rx="53" ry="31" fill="#a85a80" stroke="#000" stroke-width="2.500"/>
<path d="M733 403C738 388 760 378 783 378 808 378 828 388 834 403 830 420 800 428 783 428 760 428 738 420 733 403Z" fill="#fff"/>
<path d="M741 415C741 400 765 385 783 385 800 385 826 400 826 415" fill="none" stroke="#000" stroke-width="1.400"/>
<path d="M760 428C762 418 772 411 783 411 794 411 804 418 807 428 795 431 772 431 760 428Z" fill="#8888ee" stroke="#000" stroke-width="1"/>
<circle cx="771" cy="417" r="3.500" fill="#000"/><ellipse cx="783" cy="425" rx="6" ry="4" fill="#a8a8f0" stroke="#000"/><circle cx="783" cy="425" r="1.500" fill="#000"/>
<ellipse cx="738" cy="372" rx="7" ry="4.500" fill="#111"/><ellipse cx="827" cy="423" rx="7" ry="4.500" fill="#111"/>
<!-- CSYS -->
<text x="788" y="441" style="font-size:12px;fill:#3a4ef0">ZC</text>
<path d="M783 446 785 465 783 484 781.500 465Z" fill="#6a7cc0"/>
<text x="808" y="461" style="font-size:12px;fill:#5a9a6a">YC</text>
<path d="M786 486 803 472 824 464 808 477Z" fill="#b0e0b8"/>
<text x="807" y="524" style="font-size:12px;fill:#c05a5a">XC</text>
<path d="M787 490 806 496 823 510 803 502Z" fill="#ecb0b0"/>
<!-- flower -->
<g fill="none" stroke="#f3a24c" stroke-width="3.200">
<path d="M661 522C668 510 675 504 680 496 688 492 696 496 702 492 706 484 716 483 727 483 738 483 748 484 753 492 760 496 770 492 774 496 778 504 782 510 792 522 784 530 776 532 772 539 770 546 762 546 752 552 746 560 720 562 712 556 708 548 696 548 684 543 678 536 668 530 661 522Z"/>
<ellipse cx="727" cy="522" rx="48" ry="27"/>
<path d="M690 512V530C694 540 760 540 764 530V512"/>
<ellipse cx="727" cy="506" rx="37" ry="15"/>
<ellipse cx="727" cy="503" rx="24" ry="9"/>
<path d="M703 500C706 488 748 488 751 500M715 497C718 490 736 490 739 497M712 493C720 488 734 488 742 493M720 495 734 495M722 501 724 506M732 501 730 506"/>
<path d="M702 522V530M718 525V534M735 525V534M751 522V530M694 516V523M760 516V523"/>
</g>
<!-- triad -->
<path d="M377 748 392 756V774L377 783 362 774V756Z" fill="#a9a9a9"/>
<path d="M362 756 377 765 392 756M377 765V783" stroke="#bbb" fill="none"/>
<path d="M361 772V750" stroke="#1030d0" stroke-width="3"/><path d="M361 746 365 752H357Z" fill="#1030d0"/>
<text x="356" y="745" style="font-size:12px;fill:#1030d0;font-weight:bold">Z</text>
<circle cx="361" cy="773" r="3.500" fill="#ddd"/>
<path d="M362 774 385 786" stroke="#c02020" stroke-width="2.500"/>
<text x="387" y="794" style="font-size:11px;fill:#d02020">X</text>
<path d="M390 757 393 753" stroke="#208020" stroke-width="1.500"/>

<!-- bottom -->
<rect y="827" width="1253" height="44" fill="#dddde0"/>
<rect y="827" width="1253" height="44" fill="url(#dit)"/>
<rect x="0" y="827" width="311" height="2" fill="#aaa"/>
<rect x="0" y="835" width="13" height="20" fill="#9a9a90"/>
<use href="#yc" x="29" y="841"/><use href="#yc" x="35" y="851"/><path d="M37 838H45M41 834V842" stroke="#2080e0" stroke-width="2"/>
<use href="#yc" x="65" y="846"/><path d="M72 838 76 834M57 853 53 857" stroke="#3060c0" stroke-width="2"/>
<path d="M89 834 95 840 89 845ZM102 834 96 840 102 845Z" fill="#1020c0"/><rect x="86" y="848" width="8" height="8" fill="#f4e040" stroke="#222"/><path d="M98 846 106 856H98Z" fill="#c01010"/><path d="M95.500 832V858" stroke="#111" stroke-dasharray="2 1"/>
<path d="M115 829V859" stroke="#f2f2f4"/>
<use href="#yc" x="128" y="840"/><use href="#yc" x="128" y="851"/><use href="#yc" x="139" y="851"/><use href="#ar" x="154" y="853"/>
<path d="M162.500 829V861" stroke="#c8c8ca"/>
<path d="M0 861H130" stroke="#bbb"/>
<rect x="130" y="862" width="1123" height="9" fill="#d0d0d2"/><path d="M130 862H1253" stroke="#eee"/>
<rect x="172" y="864" width="24" height="7" fill="#8a9090"/><path d="M142 866H155" stroke="#333"/><circle cx="306" cy="869" r="2" fill="#d01010"/><circle cx="320" cy="868" r="2" fill="#d01010"/><path d="M257 866V871" stroke="#222"/>
<rect x="1090" y="857" width="37" height="16" fill="#dfe3ec" stroke="#1e7fe8" stroke-width="2"/>
<circle cx="1109" cy="871" r="9" fill="#aab2c0"/>
</svg>
</body></html>
